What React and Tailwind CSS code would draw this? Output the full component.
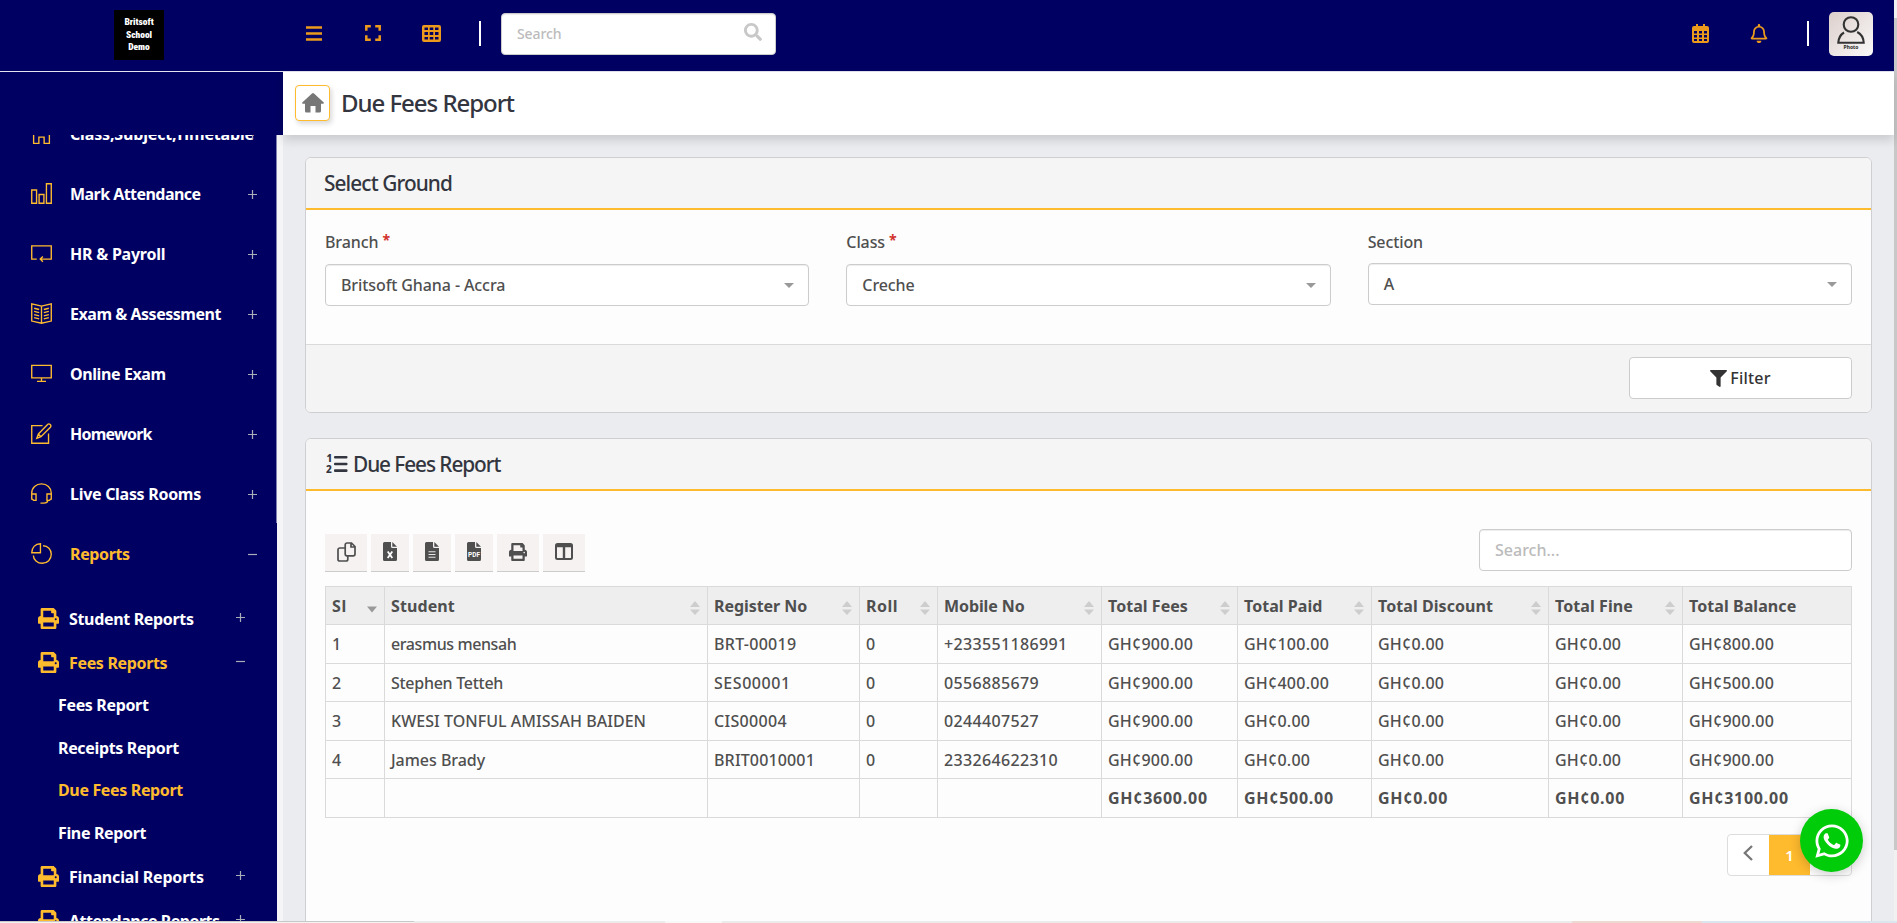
import { FaFilter, FaPrint, FaRegBell, FaSearch, FaWhatsapp } from "react-icons/fa";

const line = { viewBox: "0 0 20 20", fill: "none", stroke: "currentColor", strokeWidth: 1.3, className: "w-[21px] h-[21px]" };

const HomeIcon = () => (
  <svg {...line}><path d="M2.500 10v9.500h5V13.500h5v6h5V10M.7 9.500 10 1.200l9.300 8.300" /></svg>
);
const BarsIcon = () => (
  <svg {...line}><path d="M.7 6.700h4.600v12.600H.7zM7.700 11h4.600v8.300H7.700zM14.700.7h4.600v18.600h-4.600z" /></svg>
);
const PayrollIcon = () => (
  <svg {...line}><path d="M5.500 15.300H.7V2.700h18.600v12.600H8.800M11.300 12.800l-2.500 2.500 2.500 2.500" /></svg>
);
const BookIcon = () => (
  <svg {...line}>
    <path d="M10 3 .7.900v16.300L10 19.300l9.300-2.100V.9L10 3zM10 3v16.300M3 5l4.800 1.200M3 8l4.800 1.200M3 11l4.800 1.200M3 14l4.800 1.200M17 5l-4.800 1.200M17 8l-4.800 1.200M17 11l-4.800 1.200M17 14l-4.800 1.200" />
  </svg>
);
const MonitorIcon = () => (
  <svg {...line}><path d="M.7 2.200h18.600v12H.7zM10 14.200v3.100M5.700 17.500h8.600" /></svg>
);
const EditIcon = () => (
  <svg {...line}><path d="M11 2.500H.7v16.800h16V10M7 10.500 15.800 1.400c1.500-1.500 4.300.900 2.700 2.600L9.500 13l-4 1.500zM7 10.500l2.500 2.500" /></svg>
);
const HeadsetIcon = () => (
  <svg {...line}>
    <path d="M.7 16V9.500C.7 4.500 4.800.8 10 .8s9.300 3.700 9.300 8.700V16M.7 10.500h4.100v6H2.500L.7 15M19.300 10.500h-4.100v6h2.300l1.800-1.500M16 16.500c0 2-1.500 2.700-4 2.700H9" />
  </svg>
);
const PieIcon = () => (
  <svg {...line}><path d="M9 .7v8.600H.7C.7 4.500 4 .7 9 .7zM11.500 2.600c4.500 0 7.800 3.700 7.800 8.200 0 4.800-3.700 8.500-8.500 8.500s-8.500-3.500-8.500-7.500" /></svg>
);

const menu = [
  { label: "Class,Subject,Timetable", Icon: HomeIcon, track: "tracking-[-0.16px]" },
  { label: "Mark Attendance", Icon: BarsIcon, track: "tracking-[-0.55px]" },
  { label: "HR & Payroll", Icon: PayrollIcon, track: "tracking-[-0.23px]" },
  { label: "Exam & Assessment", Icon: BookIcon, track: "tracking-[-0.47px]" },
  { label: "Online Exam", Icon: MonitorIcon, track: "tracking-[-0.4px]" },
  { label: "Homework", Icon: EditIcon, track: "tracking-[-0.77px]" },
  { label: "Live Class Rooms", Icon: HeadsetIcon, track: "tracking-[-0.29px]" },
  { label: "Reports", Icon: PieIcon, track: "tracking-[-0.37px]", open: true },
];

function Toggle({ open }) {
  return (
    <svg viewBox="0 0 9 9" className="size-[9px]" stroke="#a9adb8" strokeWidth="1.200">
      <path d={open ? "M0 4.500h9" : "M0 4.500h9M4.500 0v9"} />
    </svg>
  );
}

function MenuItem({ label, Icon, track, open }) {
  return (
    <div className="flex h-[60px] shrink-0 items-center pl-[31px] pr-5">
      <span className="w-[39px] text-[#ffbb2e]"><Icon /></span>
      <span className={`grow pt-px font-bold whitespace-nowrap ${track} ${open ? "text-[#ffbb2e]" : "text-white"}`}>{label}</span>
      <span className="-ml-3 pt-0.5"><Toggle open={open} /></span>
    </div>
  );
}

function SubItem({ label, track, open }) {
  return (
    <div className="flex h-[44px] shrink-0 items-center pl-[38px] pr-8">
      <FaPrint className="mr-[10px] size-[21px] text-[#ffbb2e]" />
      <span className={`grow pt-px font-bold whitespace-nowrap ${track} ${open ? "text-[#ffbb2e]" : "text-white"}`}>{label}</span>
      <span className="pb-px"><Toggle open={open} /></span>
    </div>
  );
}

const children = ["Fees Report", "Receipts Report", "Due Fees Report", "Fine Report"];

function Sidebar() {
  return (
    <aside className="flex w-[283px] shrink-0 bg-[#f5f5f7]">
      <div className="flex w-[277px] flex-col overflow-hidden bg-[#000063]">
        <div className="-mt-[32px] flex flex-col">
          {menu.map((m) => <MenuItem key={m.label} {...m} />)}
          <div className="mt-[13px] flex flex-col">
            <SubItem label="Student Reports" track="tracking-[-0.33px]" />
            <SubItem label="Fees Reports" track="tracking-[-0.34px]" open />
            <div className="flex flex-col">
              {children.map((c) => (
                <div key={c} className={`flex h-[42.500px] items-center pl-[58px] font-bold tracking-[-0.35px] ${c === "Due Fees Report" ? "text-[#ffbb2e]" : "text-white"}`}>{c}</div>
              ))}
            </div>
            <SubItem label="Financial Reports" track="tracking-[-0.18px]" />
            <SubItem label="Attendance Reports" track="tracking-[-0.48px]" />
          </div>
        </div>
      </div>
      <div className="-ml-px h-[388px] w-px bg-[#8080b1]" />
    </aside>
  );
}

function Header() {
  return (
    <header className="flex h-[72px] shrink-0 border-b border-[#e4e4f0] bg-[#000063] text-[#eb9a1c]">
      <div className="flex w-[306px] pl-[114px] pt-[10px]">
        <div className="flex h-[50px] w-[50px] flex-col items-center justify-center bg-black text-white">
          {["Britsoft", "School", "Demo"].map((w) => (
            <span key={w} className="font-['Roboto'] text-[9.500px] font-black leading-[12.500px] [font-stretch:75%]">{w}</span>
          ))}
        </div>
      </div>
      <div className="flex items-start pt-[24px]">
        <svg viewBox="0 0 16 15" className="mt-[2px] h-[15px] w-4" stroke="currentColor" strokeWidth="2.400"><path d="M0 1.500h16M0 7.500h16M0 13.500h16" /></svg>
        <svg viewBox="0 0 16 16" className="ml-[43px] mt-px size-4" fill="none" stroke="currentColor" strokeWidth="2.500">
          <path d="M1.300 5.800V1.300h4.500M10.200 1.300h4.500v4.500M14.700 10.200v4.500h-4.500M5.800 14.700H1.300v-4.500" />
        </svg>
        <svg viewBox="0 0 19 17" className="ml-[41px] mt-px h-[17px] w-[19px]" fill="currentColor" fillRule="evenodd">
          <path d="M2 0h15a2 2 0 0 1 2 2v13a2 2 0 0 1-2 2H2a2 2 0 0 1-2-2V2a2 2 0 0 1 2-2zM2.500 2.500V5H6V2.500zM7.700 2.500V5h3.600V2.500zM13 2.500V5h3.500V2.500zM2.500 7v3H6V7zM7.700 7v3h3.600V7zM13 7v3h3.500V7zM2.500 12v2.500H6V12zM7.700 12v2.500h3.600V12zM13 12v2.500h3.500V12z" />
        </svg>
      </div>
      <div className="ml-[38px] mt-[21px] h-[25px] w-[2px] bg-white" />
      <div className="ml-5 mt-[13px] flex h-[42px] w-[275px] items-center justify-between rounded-[4px] border border-[#ccc] bg-white pl-[15px] pr-[13px] shadow-[inset_0_1px_1px_rgba(0,0,0,0.075)]">
        <span className="text-[14px] font-medium tracking-[-0.09px] text-[#bbb]">Search</span>
        <FaSearch className="mb-1 size-[18px] text-[#c8c8c8]" />
      </div>
      <div className="ml-auto flex items-start pt-[24px]">
        <svg viewBox="0 0 17 19" className="h-[19px] w-[17px]" fill="currentColor" fillRule="evenodd">
          <path d="M2 2h2V0h2v2h5V0h2v2h2a2 2 0 0 1 2 2v13a2 2 0 0 1-2 2H2a2 2 0 0 1-2-2V4a2 2 0 0 1 2-2zM2 7v2.500h3V7zM7 7v2.500h3V7zM12 7v2.500h3V7zM2 11v2.500h3V11zM7 11v2.500h3V11zM12 11v2.500h3V11zM2 15v2h3v-2zM7 15v2h3v-2zM12 15v2h3v-2z" />
        </svg>
        <FaRegBell className="ml-[41px] h-[19px] w-[18px]" />
      </div>
      <div className="ml-[39px] mt-[21px] h-[25px] w-[2px] bg-white" />
      <div className="ml-5 mr-[21px] mt-3 flex size-[44px] flex-col items-center rounded-[5px] bg-linear-to-br from-[#dccfcb] to-[#fafafa] pt-1">
        <svg viewBox="0 0 28 28" className="h-[28px] w-[30px]" fill="none" stroke="#333" strokeWidth="2.100">
          <circle cx="14" cy="8.500" r="7.300" /><path d="M7 16.500c-4 2.500-5.500 5.500-5.700 10.300h25.400c-.2-5-2-8.500-6.500-10.800" />
        </svg>
        <span className="text-[5px] font-bold leading-[7px] text-[#222]">Photo</span>
      </div>
    </header>
  );
}

function Select({ label, required, value, up }) {
  return (
    <div className="flex flex-1 flex-col">
      <div className="flex h-6 items-center font-medium tracking-[-0.1px]">
        {label}{required && <span className="ml-1 pb-1 text-[14px] font-bold text-[#d2322d]">*</span>}
      </div>
      <div className={`flex h-[42px] items-center justify-between rounded-[4px] border border-[#ccc] bg-white pl-[15px] pr-[14px] shadow-[inset_0_1px_1px_rgba(0,0,0,0.075)] ${up ? "mt-[9px]" : "mt-[10px]"}`}>
        <span className="font-medium tracking-[-0.1px]">{value}</span>
        <svg viewBox="0 0 10 5" className="h-[5px] w-[10px]" fill="#999"><path d="M0 0h10L5 5z" /></svg>
      </div>
    </div>
  );
}

function NumberedList() {
  return (
    <svg viewBox="0 0 22 20" className="h-[20px] w-[22px]" fill="#33353f">
      <text x="0.500" y="8.300" fontSize="10" fontWeight="800" fontFamily="Noto Sans">1</text>
      <text x="0" y="19" fontSize="10" fontWeight="800" fontFamily="Noto Sans">2</text>
      <rect x="8" y="2" width="13.500" height="2.600" rx="1" />
      <rect x="8" y="8.700" width="13.500" height="2.600" rx="1" />
      <rect x="8" y="15.300" width="13.500" height="2.600" rx="1" />
    </svg>
  );
}

function FileIcon({ children }) {
  return (
    <svg viewBox="0 0 14 19" className="h-[19px] w-[14px]">
      <path fill="#4f4f4f" d="M1.500 0H8v4.500A1.500 1.500 0 0 0 9.500 6H14v11.500a1.500 1.500 0 0 1-1.500 1.500h-11A1.500 1.500 0 0 1 0 17.500v-16A1.500 1.500 0 0 1 1.500 0z" />
      <path fill="#4f4f4f" d="M9.300 0 14 4.700H9.300z" />
      {children}
    </svg>
  );
}

const tools = [
  <svg key="copy" viewBox="0 0 19 20" className="h-[20px] w-[19px]" fill="none" stroke="#4f4f4f" strokeWidth="1.700">
    <path d="M10 1h4.500L18 4.500V12a1.800 1.800 0 0 1-1.800 1.800H10A1.800 1.800 0 0 1 8.200 12V2.800A1.800 1.800 0 0 1 10 1zM14 1v4h4M8 6H2.800A1.800 1.800 0 0 0 1 7.800v9.400A1.800 1.800 0 0 0 2.800 19H9a1.800 1.800 0 0 0 1.800-1.800V14" />
  </svg>,
  <FileIcon key="xls"><path d="m4.700 9.500 4.600 6.500m0-6.500L4.700 16" stroke="#fff" strokeWidth="1.800" /></FileIcon>,
  <FileIcon key="csv"><path d="M3.500 9.700h7M3.500 12.500h7M3.500 15.200h7" stroke="#e5e5e5" strokeWidth="1.100" /></FileIcon>,
  <FileIcon key="pdf"><text x="7" y="14.500" textAnchor="middle" fill="#fff" fontSize="6.500" fontWeight="700" fontFamily="Roboto">PDF</text></FileIcon>,
  <FaPrint key="print" className="size-[18px] text-[#4f4f4f]" />,
  <svg key="cols" viewBox="0 0 18 17" className="h-[17px] w-[18px]" fill="none" stroke="#4f4f4f" strokeWidth="2">
    <rect x="1" y="1" width="16" height="15" rx="1.500" /><path d="M1 3h16M9 3v13" strokeWidth="2.400" />
  </svg>,
];

const columns = [
  ["Sl", "w-[59px]", "tracking-[0.8px]"], ["Student", "w-[323px]", "tracking-[0.1px]"], ["Register No", "w-[152px]", "tracking-[-0.06px]"],
  ["Roll", "w-[78px]", "tracking-[0.49px]"], ["Mobile No", "w-[164px]", "tracking-[-0.1px]"], ["Total Fees", "w-[136px]", "tracking-[0.04px]"],
  ["Total Paid", "w-[134px]", "tracking-[0.05px]"], ["Total Discount", "w-[177px]", "tracking-[0.06px]"],
  ["Total Fine", "w-[134px]", "tracking-[0.09px]"], ["Total Balance", "w-[169px]", "tracking-[0.07px]"],
];

const rows = [
  ["1", "erasmus mensah", "BRT-00019", "0", "+233551186991", "GH¢900.00", "GH¢100.00", "GH¢0.00", "GH¢0.00", "GH¢800.00"],
  ["2", "Stephen Tetteh", "SES00001", "0", "0556885679", "GH¢900.00", "GH¢400.00", "GH¢0.00", "GH¢0.00", "GH¢500.00"],
  ["3", "KWESI TONFUL AMISSAH BAIDEN", "CIS00004", "0", "0244407527", "GH¢900.00", "GH¢0.00", "GH¢0.00", "GH¢0.00", "GH¢900.00"],
  ["4", "James Brady", "BRIT0010001", "0", "233264622310", "GH¢900.00", "GH¢0.00", "GH¢0.00", "GH¢0.00", "GH¢900.00"],
];
const nameTracking = ["tracking-[-0.41px]", "tracking-[-0.28px]", "tracking-[0.04px]", "tracking-[-0.03px]"];
const registerTracking = ["tracking-[0.29px]", "tracking-[0.55px]", "tracking-[0.33px]", "tracking-[0.15px]"];
const rowHeight = ["h-[39px]", "h-[38px]", "h-[39px]", "h-[38px]"];
const totals = ["", "", "", "", "", "GH¢3600.00", "GH¢500.00", "GH¢0.00", "GH¢0.00", "GH¢3100.00"];

function cellTracking(row, col) {
  if (col === 1) return nameTracking[row];
  if (col === 2) return registerTracking[row];
  return col === 4 ? "tracking-[0.35px]" : "tracking-[0.24px]";
}

function SortIcon({ index }) {
  if (index === 9) return null;
  return (
    <svg viewBox="0 0 10 14" className="mt-1 h-[14px] w-[10px]" fill={index === 0 ? "#999" : "#cdcdcd"}>
      {index > 0 && <path d="M0 6h10L5 0z" />}
      <path d={index === 0 ? "M0 5.500h10L5 11.500z" : "M0 8.500h10L5 14z"} />
    </svg>
  );
}

const cell = "border-r border-b border-[#dadada] pl-[6px] text-left";

function FeesTable() {
  return (
    <table className="mt-[15px] w-[1527px] table-fixed border-separate border-spacing-0 border-t border-l border-[#dadada] leading-5">
      <thead>
        <tr className="h-[38px] bg-[#eee]">
          {columns.map(([name, width, track], i) => (
            <th key={name} className={`${cell} ${width} pr-[7px] font-bold`}>
              <div className="flex items-center justify-between"><span className={`whitespace-nowrap ${track}`}>{name}</span><SortIcon index={i} /></div>
            </th>
          ))}
        </tr>
      </thead>
      <tbody>
        {rows.map((r, ri) => (
          <tr key={r[0]} className={rowHeight[ri]}>
            {r.map((v, ci) => <td key={ci} className={`${cell} font-medium whitespace-nowrap ${cellTracking(ri, ci)}`}>{v}</td>)}
          </tr>
        ))}
        <tr className="h-[39px]">
          {totals.map((v, i) => <td key={i} className={`${cell} font-bold tracking-[0.74px]`}>{v}</td>)}
        </tr>
      </tbody>
    </table>
  );
}

export default function App() {
  return (
    <div className="relative flex h-[923px] w-[1897px] flex-col overflow-hidden bg-[#ebecf0] font-['Noto_Sans',sans-serif] text-[16px] leading-6 text-[#4f4f4f]">
      <div className="flex h-[921px] shrink-0 overflow-hidden">
        <div className="flex w-[1894px] flex-col">
          <Header />
          <div className="relative z-10 flex h-[63px] shrink-0">
            <div className="w-[283px] bg-[#000063]" />
            <div className="flex grow items-center bg-white pb-px pl-3 shadow-[0_5px_10px_rgba(0,0,0,0.15)]">
              <div className="flex h-[36px] w-[35px] items-center justify-center rounded-[4px] border border-[#ffbb2e] bg-white shadow-[2px_3px_5px_rgba(0,0,0,0.15)]">
                <svg viewBox="0 0 22 20" className="h-5 w-[22px]" fill="#777">
                  <path d="M10 .5a1.500 1.500 0 0 1 2 0l9.500 8.700c.7.600.3 1.600-.6 1.600H19V18a1.500 1.500 0 0 1-1.500 1.500H13.500V13h-5v6.500h-4A1.500 1.500 0 0 1 3 18v-7.200H1.100c-.9 0-1.300-1-.6-1.600z" />
                </svg>
              </div>
              <h1 className="ml-[11px] text-[24px] font-medium tracking-[-1.04px] text-[#33353f]">Due Fees Report</h1>
            </div>
          </div>
          <div className="flex min-h-0 grow">
            <Sidebar />
            <main className="flex grow flex-col px-[22px] pt-[22px]">
              <section className="h-[256px] shrink-0 overflow-hidden rounded-[6px] border border-[#cfcfd2] bg-[#fdfdfd]">
                <div className="flex h-[52px] items-center border-b-2 border-[#ffbb2e] bg-[#f5f5f5] pl-[18px]">
                  <h2 className="text-[20.800px] font-medium tracking-[-0.9px] text-[#33353f]">Select Ground</h2>
                </div>
                <div className="flex h-[134px] gap-[37px] px-[19px] pt-5">
                  <Select label="Branch" required value="Britsoft Ghana - Accra" />
                  <Select label="Class" required value="Creche" />
                  <Select label="Section" value="A" up />
                </div>
                <div className="flex h-[69px] justify-end border-t border-[#dadada] bg-[#f4f4f4] pr-[19px] pt-3">
                  <button className="flex h-[42px] w-[223px] items-center justify-center gap-[3px] rounded-[4px] border border-[#ccc] bg-white font-medium tracking-[0.2px] text-[#333]">
                    <FaFilter className="size-[17px]" />Filter
                  </button>
                </div>
              </section>
              <section className="mt-[25px] h-[520px] shrink-0 rounded-t-[6px] border border-[#cfcfd2] bg-[#fdfdfd]">
                <div className="flex h-[52px] items-center rounded-t-[5px] border-b-2 border-[#ffbb2e] bg-[#f5f5f5] pl-[20px] text-[#33353f]">
                  <NumberedList />
                  <h2 className="ml-[5px] text-[20.800px] font-medium tracking-[-1.07px]">Due Fees Report</h2>
                </div>
                <div className="px-[19px] pt-[38px]">
                  <div className="flex h-[42px] items-start justify-between">
                    <div className="flex gap-1 pt-[5px]">
                      {tools.map((t) => (
                        <div key={t.key} className={`flex h-[38px] items-center justify-center border-b border-[#ccc] bg-[#f6f2f2] pb-0.5 ${["xls", "csv", "pdf"].includes(t.key) ? "w-[38px]" : "w-[42px]"}`}>{t}</div>
                      ))}
                    </div>
                    <div className="flex h-[42px] w-[373px] items-center rounded-[4px] border border-[#ccc] bg-white pl-[15px] font-medium text-[#bbb] shadow-[inset_0_1px_1px_rgba(0,0,0,0.075)]">Search...</div>
                  </div>
                  <FeesTable />
                  <div className="mt-4 flex justify-end">
                    <div className="flex h-[42px] w-[125px] overflow-hidden rounded-[4px] border border-[#ddd] bg-white">
                      <div className="flex w-[41px] items-center justify-center">
                        <svg viewBox="0 0 10 16" className="mb-1 mr-0.5 h-4 w-[10px]" fill="none" stroke="#777" strokeWidth="2.300"><path d="M9 1 1.800 8 9 15" /></svg>
                      </div>
                      <div className="flex w-[41px] items-center justify-center bg-[#ffbb2e] text-[15px] font-semibold text-white">1</div>
                    </div>
                  </div>
                </div>
              </section>
            </main>
          </div>
        </div>
        <div className="flex w-[3px] flex-col bg-[#f1f1f1] pt-[18px]"><div className="h-[832px] bg-[#c8c8c8]" /></div>
      </div>
      <div className="flex h-[2px] shrink-0 bg-[#ebebeb]">
        <div className="w-[414px] border-t border-[#c8c8c8] bg-[#f3f3f3]" />
        <div className="w-[251px] bg-[#ebebeb]" />
        <div className="w-[57px] bg-[#f8f8f8]" />
        <div className="w-[850px] bg-[#ebebeb]" />
        <div className="w-[130px] bg-[#ecdad2]" />
        <div className="grow bg-[#dbe5ee]" />
      </div>
      <div className="absolute top-[809px] left-[1800px] z-20 flex size-[63px] items-center justify-center rounded-full bg-[#00cc0a] text-white shadow-[0_3px_12px_rgba(0,0,0,0.2)]">
        <FaWhatsapp className="size-[38px]" />
      </div>
    </div>
  );
}
